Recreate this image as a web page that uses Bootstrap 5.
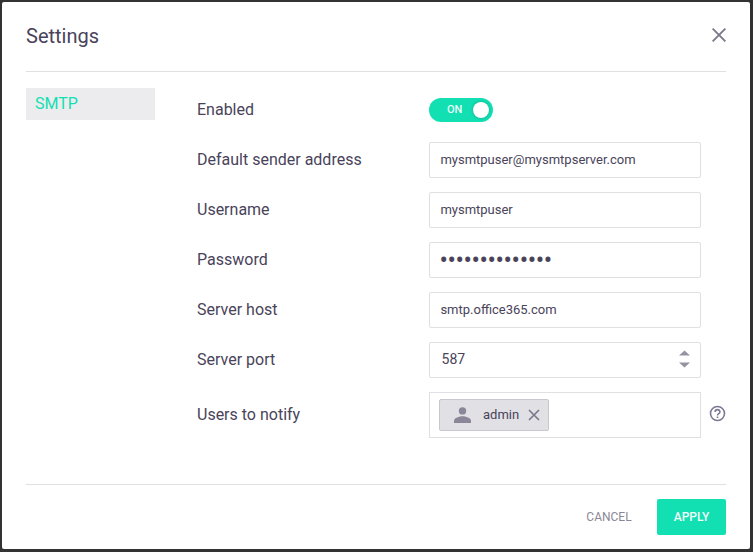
<!DOCTYPE html>
<html lang="en">
<head>
<meta charset="utf-8">
<meta name="viewport" content="width=device-width, initial-scale=1">
<title>Settings</title>
<link href="https://cdn.jsdelivr.net/npm/bootstrap@5.3.0/dist/css/bootstrap.min.css" rel="stylesheet">
<style>
  body { background: #343334; padding: 2px 3px 3px 2px; height: 552px; overflow: hidden; font-family: Roboto, "Liberation Sans", sans-serif; color: #49435a; }
  .settings-panel { height: 547px; border: 0; border-radius: 2px; padding: 0 24px; color: inherit; }
  .settings-head { height: 70px; padding: 0 0 2px; border-bottom: 1px solid #e0e0e2; border-radius: 0; }
  .settings-title { font-size: 20px; font-weight: 400; line-height: 24px; }
  .settings-body { height: 412px; padding: 16px 0 0; }
  .settings-foot { height: 65px; border-top: 1px solid #e0e0e2; padding: 0; border-radius: 0; }
  .plain-btn { border: 0; background: none; padding: 0 0 2px; line-height: 0; }
  .side-nav { width: 129px; margin-right: 42px; }
  .side-nav .nav-link { height: 32px; padding: 0 9px; line-height: 32px; font-size: 16px; color: #12dfb2; background: #ececee; border-radius: 0; }
  .form-line { height: 36px; margin-bottom: 14px; }
  .form-line.first { margin-top: 4px; }
  .form-line.tall { height: 46px; margin-bottom: 0; }
  .form-line label { width: 232px; font-size: 16px; line-height: 20px; }
  .field { width: 272px; height: 36px; padding: 0 10px 1px; border: 1px solid #e0e0e3; border-radius: 2px; font-size: 13px; line-height: 20px; color: #49435a; }
  .field.form-control { padding-left: 10.4px; }
  .field.form-control:focus { box-shadow: none; color: #49435a; }
  .field.form-control.secret { font-size: 25px; letter-spacing: -.41px; padding: 1px 9px 0 9.4px; }
  .field.port { font-size: 14px; padding: 0 10px 2px 11.6px; }
  .field.tags { height: 46px; padding: 0 9px; border-radius: 0; }
  .user-tag { width: 110px; height: 32px; border: 1px solid #c9c7cf; border-radius: 2px; background: #e1e0e5; padding-left: 14px; font-size: 13px; }
  .tag-name { margin: 0 9px 0 12px; }
  .help-icon { margin: 0 0 4px 8px; }
  .toggle { width: 64px; height: 24px; border-radius: 12px; background: #12dfb2; color: #e9fcf7; font-size: 11px; font-weight: 500; line-height: 24px; padding: 0 4px 0 18px; }
  .knob { width: 16px; height: 16px; border-radius: 50%; background: #fff; box-shadow: 0 0 3px rgba(0,70,60,.35); }
  .action { height: 36px; border: 0; border-radius: 2px; padding: 0; font-size: 12px; line-height: 36px; }
  .action.cancel { width: 78px; margin-right: 9px; color: #8b8798; }
  .action.apply { width: 69px; background: #12dfb2; color: #f2fdfa; font-weight: 500; }
</style>
</head>
<body>
<main class="modal-content settings-panel d-flex flex-column bg-white">
  <header class="modal-header settings-head d-flex align-items-center justify-content-between">
    <h1 class="settings-title mb-0">Settings</h1>
    <button class="plain-btn" type="button" aria-label="Close">
      <svg width="14" height="14" viewBox="0 0 14 14" fill="none" stroke="#7d798c" stroke-width="1.9"><path d="M.6.6l12.8 12.8M13.4.6.6 13.4"/></svg>
    </button>
  </header>
  <div class="modal-body settings-body d-flex align-items-start">
    <nav class="nav flex-column side-nav flex-shrink-0"><a class="nav-link" href="#">SMTP</a></nav>
    <form class="flex-grow-1">
      <div class="form-line first d-flex align-items-center">
        <label>Enabled</label>
        <div class="toggle d-flex align-items-center justify-content-between" role="switch" aria-checked="true"><span>ON</span><span class="knob"></span></div>
      </div>
      <div class="form-line d-flex align-items-center">
        <label for="sender">Default sender address</label>
        <input id="sender" class="form-control field" type="text" value="mysmtpuser@mysmtpserver.com">
      </div>
      <div class="form-line d-flex align-items-center">
        <label for="username">Username</label>
        <input id="username" class="form-control field" type="text" value="mysmtpuser">
      </div>
      <div class="form-line d-flex align-items-center">
        <label for="password">Password</label>
        <input id="password" class="form-control field secret" type="password" value="smtppassword12">
      </div>
      <div class="form-line d-flex align-items-center">
        <label for="host">Server host</label>
        <input id="host" class="form-control field" type="text" value="smtp.office365.com">
      </div>
      <div class="form-line d-flex align-items-center">
        <label>Server port</label>
        <div class="field port d-flex align-items-center justify-content-between">
          <span>587</span>
          <svg width="11" height="18" viewBox="0 0 11 18" fill="#9592a1"><path d="M0 5.5 5.5.5 11 5.5zM0 12.500h11L5.500 17.500z"/></svg>
        </div>
      </div>
      <div class="form-line tall d-flex align-items-center">
        <label>Users to notify</label>
        <div class="field tags d-flex align-items-center">
          <div class="user-tag d-flex align-items-center">
            <svg width="17" height="16" viewBox="0 0 17 16" fill="#8b8798"><circle cx="8.5" cy="3.9" r="3.7"/><path d="M0 16v-2.2C0 11 5.6 9.3 8.5 9.3S17 11 17 13.8V16z"/></svg>
            <span class="tag-name">admin</span>
            <svg width="12" height="12" viewBox="0 0 12 12" fill="none" stroke="#7d798c" stroke-width="1.7"><path d="M1 1l10 10M11 1 1 11"/></svg>
          </div>
        </div>
        <svg class="help-icon" width="17" height="17" viewBox="0 0 17 17" fill="none" stroke="#7c7896" stroke-width="1.6"><circle cx="8.5" cy="8.5" r="7"/><path d="M6.1 6.9c0-3.100 4.800-3.100 4.800 0 0 1.700-2.400 1.700-2.400 3.500M8.500 11.500v1.600"/></svg>
      </div>
    </form>
  </div>
  <footer class="modal-footer settings-foot d-flex align-items-center justify-content-end">
    <button class="btn action cancel my-0 ms-0" type="button">CANCEL</button>
    <button class="btn action apply m-0" type="button">APPLY</button>
  </footer>
</main>
<script src="https://cdn.jsdelivr.net/npm/bootstrap@5.3.0/dist/js/bootstrap.bundle.min.js"></script>
</body>
</html>
